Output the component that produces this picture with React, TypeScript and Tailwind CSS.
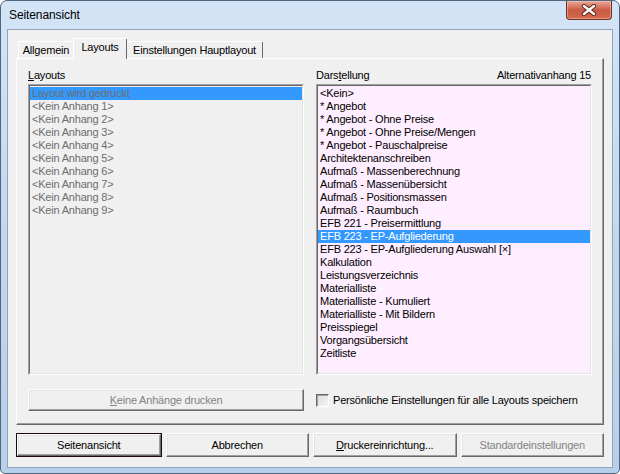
import React from 'react';

// Seitenansicht – Dialog im Windows-7-Stil

const leftItems = [
  'Layout wird gedruckt',
  '<Kein Anhang 1>',
  '<Kein Anhang 2>',
  '<Kein Anhang 3>',
  '<Kein Anhang 4>',
  '<Kein Anhang 5>',
  '<Kein Anhang 6>',
  '<Kein Anhang 7>',
  '<Kein Anhang 8>',
  '<Kein Anhang 9>',
];

const rightItems = [
  '<Kein>',
  '* Angebot',
  '* Angebot - Ohne Preise',
  '* Angebot - Ohne Preise/Mengen',
  '* Angebot - Pauschalpreise',
  'Architektenanschreiben',
  'Aufmaß - Massenberechnung',
  'Aufmaß - Massenübersicht',
  'Aufmaß - Positionsmassen',
  'Aufmaß - Raumbuch',
  'EFB 221 - Preisermittlung',
  'EFB 223 - EP-Aufgliederung',
  'EFB 223 - EP-Aufgliederung Auswahl [×]',
  'Kalkulation',
  'Leistungsverzeichnis',
  'Materialliste',
  'Materialliste - Kumuliert',
  'Materialliste - Mit Bildern',
  'Preisspiegel',
  'Vorgangsübersicht',
  'Zeitliste',
];

function ListBox({ items, selected, disabled }: { items: string[]; selected: number; disabled?: boolean }) {
  return (
    <div className="h-[291px] border-t border-l border-t-[#a0a0a0] border-l-[#a0a0a0] border-r border-b border-r-white border-b-white">
      <div
        className={`h-full border-t border-l border-t-[#696969] border-l-[#696969] border-r border-b border-r-[#e3e3e3] border-b-[#e3e3e3] pt-[1px] ${
          disabled ? 'bg-[#f0f0f0]' : 'bg-[#ffeeff]'
        }`}
      >
        {items.map((item, i) => (
          <div
            key={i}
            className={`h-[13px] px-[2px] leading-[13px] whitespace-nowrap ${
              i === selected ? 'bg-[#3399ff]' : ''
            } ${disabled ? 'text-[#6d6d6d]' : i === selected ? 'text-white' : 'text-black'}`}
          >
            {item}
          </div>
        ))}
      </div>
    </div>
  );
}

function Button({
  children,
  primary,
  disabled,
  className = '',
}: {
  children: React.ReactNode;
  primary?: boolean;
  disabled?: boolean;
  className?: string;
}) {
  return (
    <div className={`${primary ? 'border border-[#1a0a0a]' : ''} ${className}`}>
      <div
        className={`h-full flex items-center justify-center border border-t-white border-l-white border-r-[#696969] border-b-[#696969] bg-[#f0f0f0] shadow-[inset_-1px_-1px_0_#a0a0a0,inset_1px_1px_0_#e3e3e3] ${
          disabled ? 'text-[#838383]' : 'text-black'
        }`}
      >
        {children}
      </div>
    </div>
  );
}

function Tab({ label, active, width }: { label: string; active?: boolean; width: string }) {
  return (
    <div
      className={`${width} flex items-center justify-center border-t border-l border-t-white border-l-white border-r border-r-[#696969] bg-[#f0f0f0] rounded-t-[2px] ${
        active ? 'h-[21px] relative z-10 -mx-[1px] pb-[3px]' : 'h-[17px] self-start mt-[3px]'
      }`}
    >
      {label}
    </div>
  );
}

export default function App() {
  return (
    <div className="w-[620px] h-[474px] bg-white">
      <div className="w-[620px] h-[474px] flex flex-col rounded-t-[7px] rounded-b-[5px] border border-[#4f6580] bg-gradient-to-b from-[#d3e4f6] via-[#c3d8ee] to-[#b7cfe8] font-['Liberation_Sans',Arial,sans-serif] text-[11px] leading-[13px] tracking-[-0.2px] text-black">
        {/* Titelleiste */}
        <div className="h-[28px] relative flex items-center pl-[8px]">
          <span className="text-[12px] tracking-[-0.1px]">Seitenansicht</span>
          <div className="absolute right-[7px] top-[0px] w-[46px] h-[19px] rounded-b-[4px] border border-t-0 border-[#6b2f22] bg-gradient-to-b from-[#e9a99a] via-[#c85a44] to-[#d36a4c] flex items-center justify-center shadow-[inset_0_0_0_1px_rgba(255,200,190,0.5)]">
            <svg width="16" height="12" viewBox="0 0 16 12">
              <path d="M3 2 L13 10 M13 2 L3 10" stroke="#5a1f14" strokeWidth="4.2" strokeLinecap="round" />
              <path d="M3 2 L13 10 M13 2 L3 10" stroke="#ffffff" strokeWidth="2.4" strokeLinecap="round" />
            </svg>
          </div>
        </div>

        {/* Client-Bereich */}
        <div className="mx-[6px] h-[439px] border border-[#8ea3bc] bg-[#f0f0f0] flex flex-col">
          {/* Reiter */}
          <div className="mt-[8px] h-[21px] -mb-[1px] pl-[10px] flex items-start relative z-10">
            <Tab label="Allgemein" width="w-[56px]" />
            <Tab label="Layouts" width="w-[54px]" active />
            <Tab label="Einstellungen Hauptlayout" width="w-[137px]" />
          </div>

          {/* Reiterinhalt */}
          <div className="mx-[8px] h-[367px] border border-t-white border-l-white border-r-[#696969] border-b-[#696969] shadow-[inset_-1px_-1px_0_#a0a0a0] px-[11px] pt-[10px] flex gap-[12px]">
            <div className="w-[276px] flex flex-col">
              <div className="h-[13px] mb-[2px]">
                <span className="underline">L</span>ayouts
              </div>
              <ListBox items={leftItems} selected={0} disabled />
              <Button disabled className="mt-[14px] h-[22px]">
                <span>
                  <span className="underline">K</span>eine Anhänge drucken
                </span>
              </Button>
            </div>
            <div className="w-[276px] flex flex-col">
              <div className="h-[13px] mb-[2px] flex justify-between pr-[1px]">
                <span>
                  Dars<span className="underline">t</span>ellung
                </span>
                <span>Alternativanhang 15</span>
              </div>
              <ListBox items={rightItems} selected={11} />
              <div className="mt-[14px] h-[22px] flex items-center gap-[4px]">
                <div className="w-[13px] h-[13px] border border-t-[#696969] border-l-[#696969] border-r-white border-b-white bg-gradient-to-br from-[#dcdcdc] to-[#f4f4f4] shadow-[inset_1px_1px_0_#a0a0a0]" />
                <span>Persönliche Einstellungen für alle Layouts speichern</span>
              </div>
            </div>
          </div>

          {/* Schaltflächen */}
          <div className="mx-[8px] mt-[8px] h-[24px] flex gap-[4px]">
            <Button primary className="flex-1 h-full">
              Seitenansicht
            </Button>
            <Button className="flex-1 h-full">Abbrechen</Button>
            <Button className="flex-1 h-full">
              <span>
                <span className="underline">D</span>ruckereinrichtung...
              </span>
            </Button>
            <Button disabled className="flex-1 h-full">
              Standardeinstellungen
            </Button>
          </div>
        </div>
      </div>
    </div>
  );
}
